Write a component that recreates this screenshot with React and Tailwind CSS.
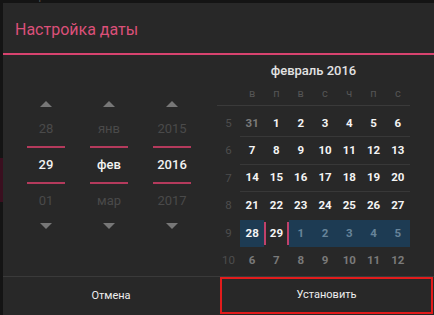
import React from "react";

const rows = [
  { wk: 5, days: [31, 1, 2, 3, 4, 5, 6], other: [0], line: true },
  { wk: 6, days: [7, 8, 9, 10, 11, 12, 13], other: [], line: true },
  { wk: 7, days: [14, 15, 16, 17, 18, 19, 20], other: [], line: true },
  { wk: 8, days: [21, 22, 23, 24, 25, 26, 27], other: [], line: false },
  { wk: 9, days: [28, 29, 1, 2, 3, 4, 5], other: [2, 3, 4, 5, 6], hl: true, line: false },
  { wk: 10, days: [6, 7, 8, 9, 10, 11, 12], other: [0, 1, 2, 3, 4, 5, 6], line: false },
];

const weekdays = ["в", "п", "в", "с", "ч", "п", "с"];

function Up() {
  return <div className="w-0 h-0 border-l-[6px] border-r-[6px] border-b-[6px] border-l-transparent border-r-transparent border-b-[#777777]" />;
}
function Down() {
  return <div className="w-0 h-0 border-l-[6px] border-r-[6px] border-t-[6px] border-l-transparent border-r-transparent border-t-[#777777]" />;
}

function Picker({ prev, cur, next }) {
  return (
    <div className="w-[38px] flex flex-col items-center pt-[46px]">
      <Up />
      <div className="h-[5px]" />
      <div className="h-[34px] w-full flex items-center justify-center text-[13px] text-[#4a4a4a]">{prev}</div>
      <div className="h-[2px] w-full bg-[#b43a5c]" />
      <div className="h-[34px] w-full flex items-center justify-center text-[13px] font-medium text-[#f2f2f2]">{cur}</div>
      <div className="h-[2px] w-full bg-[#b43a5c]" />
      <div className="h-[34px] w-full flex items-center justify-center text-[13px] text-[#4a4a4a]">{next}</div>
      <div className="h-[5px]" />
      <Down />
    </div>
  );
}

export default function App() {
  return (
    <div className="w-[434px] h-[315px] bg-[#141414] flex flex-col overflow-hidden font-['Roboto',sans-serif]">
      <div className="h-[3px] overflow-hidden pl-[15px]">
        <div className="-mt-[9px] text-[11px] leading-[12px] text-[#505050]">отображении</div>
      </div>
      <div className="flex flex-1 min-h-0">
        <div className="w-[3px] flex flex-col">
          <div className="h-[155px]" />
          <div className="h-[44px] bg-[#3a0f1f]" />
        </div>
        <div className="flex-1 bg-[#282828] flex flex-col">
          {/* header */}
          <div className="h-[50px] flex items-center pl-[12px] pt-[4px]">
            <span className="text-[16px] text-[#dc5079]">Настройка даты</span>
          </div>
          <div className="h-[2px] bg-[#d8436f]" />
          {/* body */}
          <div className="h-[221px] flex">
            <div className="w-[214px] flex pl-[24px] gap-[25px]">
              <Picker prev="28" cur="29" next="01" />
              <Picker prev="янв" cur="фев" next="мар" />
              <Picker prev="2015" cur="2016" next="2017" />
            </div>
            <div className="flex-1 flex flex-col pr-[24px]">
              <div className="mt-[7px] h-[18px] flex items-center justify-center text-[13px] font-medium text-[#e2e2e2]">
                февраль 2016
              </div>
              <div className="h-[22px] mt-[4px] flex border-b border-[#3a3a3a]">
                <div className="w-[23px]" />
                {weekdays.map((d, i) => (
                  <div key={i} className="flex-1 flex items-center justify-center text-[11px] text-[#555555]">{d}</div>
                ))}
              </div>
              <div className="h-[4px]" />
              {rows.map((r) => (
                <div key={r.wk} className="h-[27.4px] flex">
                  <div className="w-[23px] flex items-center justify-center text-[11.5px] text-[#4d4d4d]">{r.wk}</div>
                  <div className={`flex-1 flex ${r.line ? "border-b border-[#383838]" : ""} ${r.hl ? "bg-[#1d3b53]" : ""}`}>
                    {r.days.map((d, i) => {
                      const other = r.other.includes(i);
                      let color = "text-[#f4f4f4]";
                      if (other) color = r.hl ? "text-[#67849a]" : "text-[#7a7a7a]";
                      if (r.hl && i === 1) {
                        return (
                          <div key={i} className="flex-1 flex items-center justify-between bg-[#282828] py-[2px]">
                            <div className="w-[2px] self-stretch bg-[#c0416a]" />
                            <span className="text-[11.5px] font-bold text-[#f4f4f4]">{d}</span>
                            <div className="w-[2px] self-stretch bg-[#c0416a]" />
                          </div>
                        );
                      }
                      return (
                        <div key={i} className={`flex-1 flex items-center justify-center text-[11.5px] font-bold ${color}`}>{d}</div>
                      );
                    })}
                  </div>
                </div>
              ))}
            </div>
          </div>
          <div className="h-px bg-[#3a3a3a]" />
          {/* buttons */}
          <div className="flex-1 flex">
            <div className="w-[216px] flex items-center justify-center text-[11px] text-[#eeeeee]">Отмена</div>
            <div className="flex-1 ml-[1px] mr-[1px] mb-[1px] border-2 border-[#e21c1c] flex items-center justify-center text-[11px] text-[#eeeeee]">
              Установить
            </div>
          </div>
        </div>
      </div>
    </div>
  );
}
